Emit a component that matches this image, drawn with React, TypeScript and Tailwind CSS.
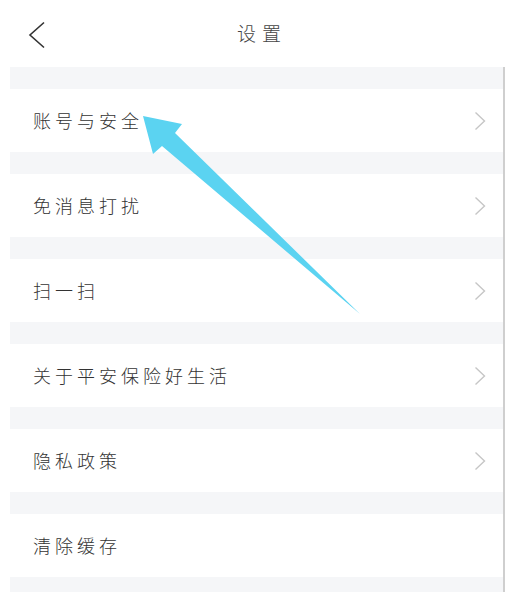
const items = [
  { label: "账号与安全", arrow: true },
  { label: "免消息打扰", arrow: true },
  { label: "扫一扫", arrow: true },
  { label: "关于平安保险好生活", arrow: true },
  { label: "隐私政策", arrow: true },
  { label: "清除缓存", arrow: false },
];

function BackIcon() {
  return (
    <svg width="18" height="28" viewBox="0 0 18 28" fill="none">
      <polyline points="16,1.5 2,14 16,26.5" stroke="#333" strokeWidth="1.6" strokeLinejoin="miter" />
    </svg>
  );
}

function RowArrow() {
  return (
    <svg width="12" height="20" viewBox="0 0 12 20" fill="none">
      <polyline points="1.5,1.5 10.5,10 1.5,18.5" stroke="#c6c6c6" strokeWidth="1.4" />
    </svg>
  );
}

export default function App() {
  return (
    <div
      className="relative w-[506px] h-[592px] overflow-hidden bg-white text-[#333]"
      style={{ fontFamily: '"Noto Sans CJK SC", "Noto Sans", sans-serif' }}
    >
      {/* Header */}
      <div className="relative flex h-[67px] items-center justify-center">
        <button className="absolute left-[28px] top-[21px]">
          <BackIcon />
        </button>
        <h1 className="pl-[18px] text-[19px] font-light tracking-[6px] text-[#444]">设置</h1>
      </div>

      {/* Settings list */}
      <div className="ml-[10px] w-[495px] border-r-2 border-[#cfcfcf]">
        {items.map((item) => (
          <div key={item.label}>
            <div className="h-[22px] bg-[#f5f6f8]" />
            <div className="flex h-[63px] items-center justify-between bg-white pl-[23px] pr-[17px]">
              <span className="text-[18px] font-light tracking-[4px] text-[#333]">{item.label}</span>
              {item.arrow && <RowArrow />}
            </div>
          </div>
        ))}
        <div className="h-[22px] bg-[#f5f6f8]" />
      </div>

      {/* Annotation arrow */}
      <svg className="absolute left-0 top-0" width="506" height="592" viewBox="0 0 506 592">
        <polygon points="143,116 182,124 175,133 360,314 162,146 153,154" fill="#5bd3f1" />
      </svg>
    </div>
  );
}
